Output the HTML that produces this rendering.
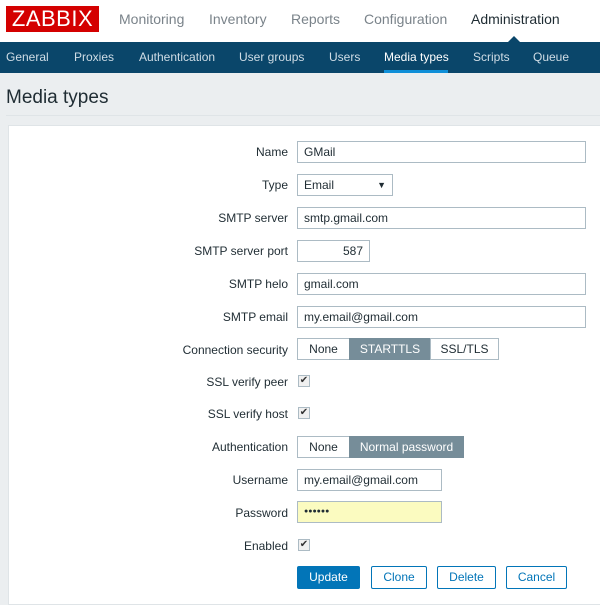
<!DOCTYPE html>
<html><head><style>
*{box-sizing:border-box;margin:0;padding:0}
body{width:600px;height:597px;overflow:hidden;background:#ebeef0;font-family:"Liberation Sans",Arial,sans-serif;font-size:12px;color:#1f2c33;position:relative}
.a{position:absolute}
.hdr{left:0;top:0;width:600px;height:42px;background:#fff}
.logo{left:6px;top:6px;width:93px;height:26px;background:#d40000;color:#fff;font-size:22px;line-height:26px;text-align:center;letter-spacing:0.5px}
.top{top:11px;font-size:14px;color:#7a838a}
.nav{left:0;top:42px;width:600px;height:31px;background:#0a466a}
.n{top:50px;font-size:12px;color:#d0dde6}
.lbl{right:312px;text-align:right;font-size:12px;color:#1f2c33}
.in{height:22px;border:1px solid #acbbc4;background:#fff;padding:0 6px;line-height:20px}
.seg{height:22px;border:1px solid #acbbc4;background:#fff;line-height:20px;text-align:center}
.on{background:#768d99;color:#fff;border-color:#768d99}
.cb{width:12px;height:12px;border:1px solid #acbbc4;background:#f0f0f0;font-size:10px;line-height:10px;text-align:center;color:#333}
.btn{top:566px;height:23px;border:1px solid #0275b8;background:#fff;color:#0275b8;text-align:center;line-height:21px;font-size:12px;border-radius:2px}
</style></head><body>
<div class="a hdr"></div>
<div class="a logo">ZABBIX</div>
<div class="a top" style="left:119px">Monitoring</div>
<div class="a top" style="left:209px">Inventory</div>
<div class="a top" style="left:291px">Reports</div>
<div class="a top" style="left:364px">Configuration</div>
<div class="a top" style="left:471px;color:#1f2c33">Administration</div>
<div class="a nav"></div>
<div class="a" style="left:508px;top:36px;width:0;height:0;border-left:6px solid transparent;border-right:6px solid transparent;border-bottom:6px solid #0a466a"></div>
<div class="a n" style="left:6px">General</div>
<div class="a n" style="left:74px">Proxies</div>
<div class="a n" style="left:139px">Authentication</div>
<div class="a n" style="left:239px">User groups</div>
<div class="a n" style="left:329px">Users</div>
<div class="a n" style="left:384px;color:#fff">Media types</div>
<div class="a" style="left:384px;top:70px;width:64px;height:3px;background:#0f8fd8"></div>
<div class="a n" style="left:473px">Scripts</div>
<div class="a n" style="left:533px">Queue</div>
<div class="a" style="left:6px;top:87px;font-size:19px;color:#1f2c33">Media types</div>
<div class="a" style="left:6px;top:115px;width:594px;height:1px;background:#dfe4e7"></div>
<div class="a" style="left:8px;top:125px;width:600px;height:480px;background:#fff;border:1px solid #dfe4e7"></div>

<div class="a lbl" style="top:145px">Name</div>
<div class="a in" style="left:297px;top:141px;width:289px">GMail</div>
<div class="a lbl" style="top:178px">Type</div>
<div class="a in" style="left:297px;top:174px;width:96px">Email<span style="position:absolute;right:6px;font-size:9px">▼</span></div>
<div class="a lbl" style="top:211px">SMTP server</div>
<div class="a in" style="left:297px;top:207px;width:289px">smtp.gmail.com</div>
<div class="a lbl" style="top:244px">SMTP server port</div>
<div class="a in" style="left:297px;top:240px;width:73px;text-align:right">587</div>
<div class="a lbl" style="top:277px">SMTP helo</div>
<div class="a in" style="left:297px;top:273px;width:289px">gmail.com</div>
<div class="a lbl" style="top:310px">SMTP email</div>
<div class="a in" style="left:297px;top:306px;width:289px">my.email@gmail.com</div>
<div class="a lbl" style="top:343px">Connection security</div>
<div class="a seg" style="left:297px;top:338px;width:53px">None</div>
<div class="a seg on" style="left:349px;top:338px;width:82px">STARTTLS</div>
<div class="a seg" style="left:430px;top:338px;width:69px">SSL/TLS</div>
<div class="a lbl" style="top:375px">SSL verify peer</div>
<div class="a cb" style="left:298px;top:375px">✔</div>
<div class="a lbl" style="top:407px">SSL verify host</div>
<div class="a cb" style="left:298px;top:407px">✔</div>
<div class="a lbl" style="top:440px">Authentication</div>
<div class="a seg" style="left:297px;top:436px;width:53px">None</div>
<div class="a seg on" style="left:349px;top:436px;width:115px">Normal password</div>
<div class="a lbl" style="top:473px">Username</div>
<div class="a in" style="left:297px;top:469px;width:145px">my.email@gmail.com</div>
<div class="a lbl" style="top:506px">Password</div>
<div class="a in" style="left:297px;top:501px;width:145px;background:#fbfbc0;font-size:7px">●●●●●●</div>
<div class="a lbl" style="top:539px">Enabled</div>
<div class="a cb" style="left:298px;top:539px">✔</div>
<div class="a btn" style="left:297px;width:63px;background:#0275b8;color:#fff">Update</div>
<div class="a btn" style="left:371px;width:56px">Clone</div>
<div class="a btn" style="left:437px;width:59px">Delete</div>
<div class="a btn" style="left:506px;width:61px">Cancel</div>
</body></html>
